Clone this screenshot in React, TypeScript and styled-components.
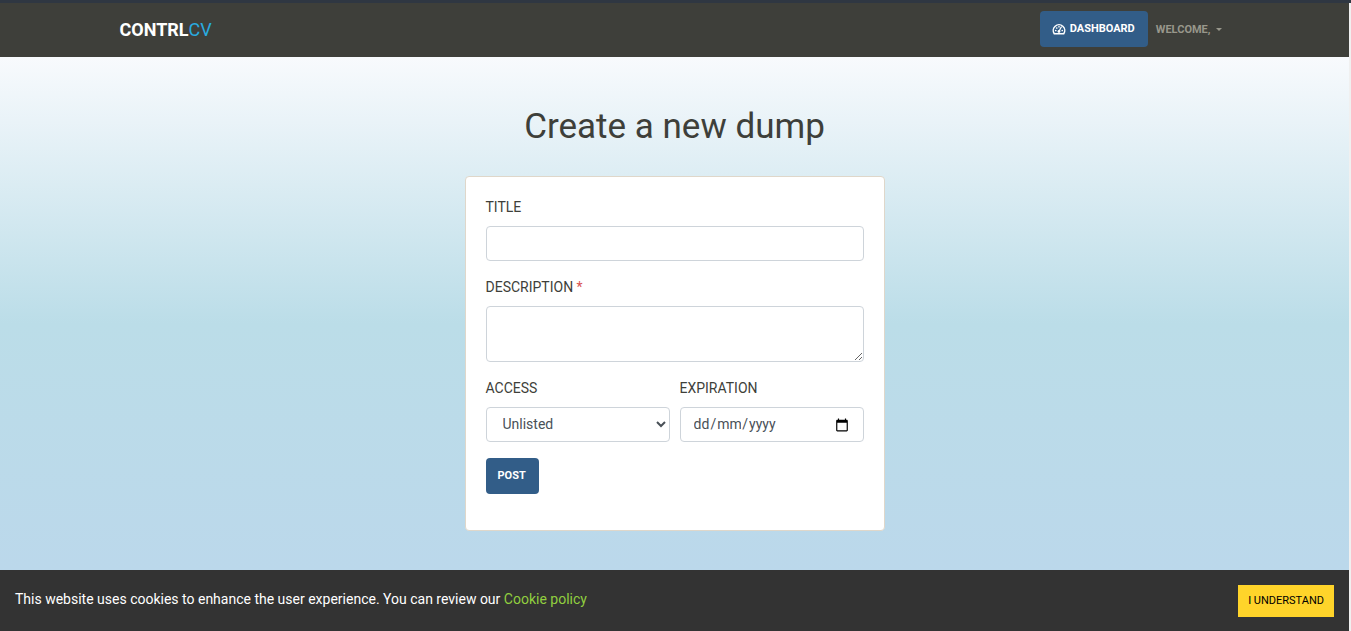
import React from "react";
import styled, { createGlobalStyle } from "styled-components";

const GlobalStyle = createGlobalStyle`
  *, *::before, *::after { box-sizing: border-box; }
  body {
    margin: 0;
    font: 400 14px/21px Roboto, "Liberation Sans", sans-serif;
    color: #3e3f3a;
    background: #f0f0f0;
  }
  input, textarea, select, button { font-family: inherit; }
`;

const Shell = styled.div`
  min-height: 100vh;
  display: flex;
  flex-direction: column;
  border-top: 3px solid #2f3742;
`;

const Page = styled.div`
  flex: 1;
  display: flex;
  flex-direction: column;
  margin-right: 2px;
`;

const Navbar = styled.header`
  height: 54px;
  background: #3e3f3a;
`;

const Container = styled.div`
  max-width: 1140px;
  height: 100%;
  margin: 0 auto;
  padding: 0 15px 2px;
  display: flex;
  align-items: center;
  justify-content: space-between;
`;

const Brand = styled.a`
  font-size: 18px;
  line-height: 27px;
  font-weight: 700;
  color: #fff;
  text-decoration: none;
`;

const BrandAccent = styled.span`
  font-weight: 400;
  color: #29abe0;
`;

const Nav = styled.nav`
  display: flex;
  align-items: center;
`;

const PrimaryButton = styled.button`
  display: inline-flex;
  align-items: center;
  gap: 4px;
  height: 36px;
  padding: 0 13px 0 12px;
  border: 0;
  border-radius: 4px;
  background: #325d88;
  color: #fff;
  font-size: 11px;
  line-height: 16px;
  font-weight: 700;
  text-transform: uppercase;
  cursor: pointer;
`;

const UserMenu = styled.button`
  display: inline-flex;
  align-items: center;
  gap: 5px;
  padding: 10px 8px 8px;
  border: 0;
  background: none;
  color: #98978b;
  font-size: 11px;
  line-height: 16px;
  font-weight: 700;
  text-transform: uppercase;
  cursor: pointer;
  &::after {
    content: "";
    margin-bottom: 2px;
    border: 3px solid transparent;
    border-top-color: currentColor;
    border-bottom: 0;
  }
`;

const Main = styled.main`
  flex: 1;
  display: flex;
  flex-direction: column;
  align-items: center;
  padding: 49px 15px 39px;
  background: linear-gradient(#f8fafd, #bbdde8 52%, #bbd8eb);
`;

const Heading = styled.h1`
  margin: 0 0 28px;
  font-size: 35px;
  line-height: 42px;
  font-weight: 400;
`;

const Card = styled.form`
  width: 100%;
  max-width: 420px;
  padding: 20px 20px 36px;
  border: 1px solid #dfd7ca;
  border-radius: 4px;
  background: #fff;
`;

const Field = styled.div`
  display: flex;
  flex-direction: column;
  flex: 1;
  min-width: 0;
  margin-bottom: 16px;
`;

const Row = styled.div`
  display: flex;
  gap: 10px;
`;

const Label = styled.label`
  margin-bottom: 8px;
  text-transform: uppercase;
`;

const Required = styled.span`
  color: #d9534f;
`;

const Input = styled.input`
  width: 100%;
  height: 35px;
  padding: 6px 12px;
  border: 1px solid #ced4da;
  border-radius: 4px;
  background: #fff;
  color: #495057;
  font-size: 14px;
`;

const TextArea = styled.textarea`
  display: block;
  width: 100%;
  height: 56px;
  padding: 6px 12px;
  border: 1px solid #ced4da;
  border-radius: 4px;
  background: #fff;
  color: #495057;
  font-size: 14px;
  resize: vertical;
`;

const Select = styled.select`
  width: 100%;
  height: 35px;
  padding: 6px 0 8px 12px;
  border: 1px solid #ced4da;
  border-radius: 4px;
  background: #fff;
  color: #495057;
  font-size: 14px;
`;

const DateBox = styled.div`
  display: flex;
  align-items: center;
  height: 35px;
  padding: 0 12px;
  border: 1px solid #ced4da;
  border-radius: 4px;
  color: #495057;
`;

const DatePart = styled.input<{ $width: number }>`
  width: ${(p) => p.$width}px;
  padding: 0 1px;
  border: 0;
  background: none;
  color: #495057;
  font-size: 14px;
  line-height: 21px;
  &::placeholder {
    color: #495057;
    opacity: 1;
  }
`;

const PickerButton = styled.button`
  display: flex;
  margin-left: auto;
  padding: 2px;
  border: 0;
  background: none;
  color: #000;
`;

const CookieBar = styled.footer`
  display: flex;
  align-items: center;
  justify-content: space-between;
  gap: 15px;
  padding: 15px 15px 14px;
  background: #333;
  color: #fff;
`;

const CookieText = styled.p`
  margin: 0 0 3px;
`;

const CookieLink = styled.a`
  color: #91cf3f;
  text-decoration: none;
`;

const AcceptButton = styled.button`
  height: 32px;
  padding: 0 10px;
  border: 0;
  background: #ffd42a;
  color: #000;
  font-size: 11px;
  line-height: 16px;
  text-transform: uppercase;
  white-space: nowrap;
  cursor: pointer;
`;

function GaugeIcon() {
  return (
    <svg width="14" height="14" viewBox="0 0 28 28" fill="none" stroke="currentColor" aria-hidden="true">
      <path d="M4.500 23.500A11.500 11.500 0 1 1 23.500 23.500Z" strokeWidth="3" strokeLinejoin="round" />
      <path d="M14 18.500L18.500 10" strokeWidth="2.500" strokeLinecap="round" />
      <g fill="currentColor" stroke="none">
        <circle cx="14" cy="19" r="2.800" />
        <circle cx="7.500" cy="17" r="1.700" />
        <circle cx="9.500" cy="12" r="1.700" />
        <circle cx="14" cy="9.500" r="1.700" />
        <circle cx="20.500" cy="17" r="1.700" />
      </g>
    </svg>
  );
}

function CalendarIcon() {
  return (
    <svg width="14" height="14" viewBox="0 0 24 24" fill="currentColor" aria-hidden="true">
      <path d="M20 3h-1V1h-2v2H7V1H5v2H4c-1.100 0-2 .9-2 2v16c0 1.100.9 2 2 2h16c1.100 0 2-.9 2-2V5c0-1.100-.9-2-2-2zm0 18H4V8h16v13z" />
    </svg>
  );
}

export default function App() {
  return (
    <Shell>
      <GlobalStyle />
      <Page>
        <Navbar>
          <Container>
            <Brand href="#">
              CONTRL<BrandAccent>CV</BrandAccent>
            </Brand>
            <Nav>
              <PrimaryButton type="button">
                <GaugeIcon />
                Dashboard
              </PrimaryButton>
              <UserMenu type="button">Welcome,</UserMenu>
            </Nav>
          </Container>
        </Navbar>
        <Main>
          <Heading>Create a new dump</Heading>
          <Card>
            <Field>
              <Label htmlFor="title">Title</Label>
              <Input id="title" type="text" />
            </Field>
            <Field>
              <Label htmlFor="description">
                Description <Required>*</Required>
              </Label>
              <TextArea id="description" />
            </Field>
            <Row>
              <Field>
                <Label htmlFor="access">Access</Label>
                <Select id="access" defaultValue="unlisted">
                  <option value="unlisted">Unlisted</option>
                  <option value="public">Public</option>
                  <option value="private">Private</option>
                </Select>
              </Field>
              <Field>
                <Label htmlFor="expiration">Expiration</Label>
                <DateBox>
                  <DatePart id="expiration" $width={18} placeholder="dd" maxLength={2} />/
                  <DatePart $width={26} aria-label="Month" placeholder="mm" maxLength={2} />/
                  <DatePart $width={30} aria-label="Year" placeholder="yyyy" maxLength={4} />
                  <PickerButton type="button" aria-label="Pick a date">
                    <CalendarIcon />
                  </PickerButton>
                </DateBox>
              </Field>
            </Row>
            <PrimaryButton type="button">Post</PrimaryButton>
          </Card>
        </Main>
        <CookieBar>
          <CookieText>
            This website uses cookies to enhance the user experience. You can review our{" "}
            <CookieLink href="#">Cookie policy</CookieLink>
          </CookieText>
          <AcceptButton type="button">I understand</AcceptButton>
        </CookieBar>
      </Page>
    </Shell>
  );
}
